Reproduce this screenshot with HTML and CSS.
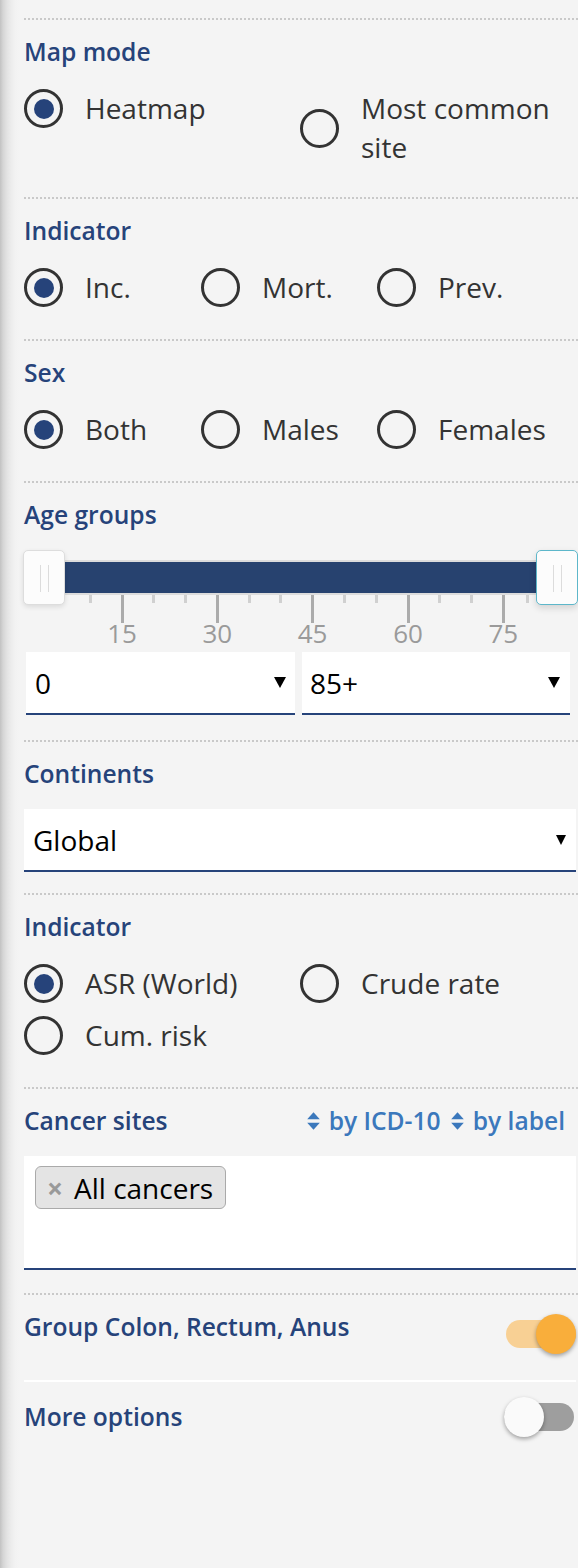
FILE: index.html
```html
<!DOCTYPE html>
<html lang="en">
<head>
<meta charset="utf-8">
<title>Map options</title>
<link rel="stylesheet" href="styles.css">
</head>
<body>
<div class="panel">

  <section class="sec">
    <h3 class="title">Map mode</h3>
    <div class="radios cols-2 radios-wrap">
      <div class="radio checked"><span class="dot"></span><span class="lbl">Heatmap</span></div>
      <div class="radio"><span class="dot"></span><span class="lbl">Most common site</span></div>
    </div>
  </section>

  <section class="sec">
    <h3 class="title">Indicator</h3>
    <div class="radios cols-3">
      <div class="radio checked"><span class="dot"></span><span class="lbl">Inc.</span></div>
      <div class="radio"><span class="dot"></span><span class="lbl">Mort.</span></div>
      <div class="radio"><span class="dot"></span><span class="lbl">Prev.</span></div>
    </div>
  </section>

  <section class="sec">
    <h3 class="title">Sex</h3>
    <div class="radios cols-3">
      <div class="radio checked"><span class="dot"></span><span class="lbl">Both</span></div>
      <div class="radio"><span class="dot"></span><span class="lbl">Males</span></div>
      <div class="radio"><span class="dot"></span><span class="lbl">Females</span></div>
    </div>
  </section>

  <section class="sec sec-age">
    <h3 class="title">Age groups</h3>
    <div class="slider">
      <div class="track"></div>
      <div class="bar"></div>
      <div class="tick" style="left:64.5px"></div>
      <div class="tick major" style="left:96.5px"></div>
      <div class="tick" style="left:128.3px"></div>
      <div class="tick" style="left:160px"></div>
      <div class="tick major" style="left:191.8px"></div>
      <div class="tick" style="left:223.5px"></div>
      <div class="tick" style="left:255.3px"></div>
      <div class="tick major" style="left:287.1px"></div>
      <div class="tick" style="left:318.9px"></div>
      <div class="tick" style="left:350.5px"></div>
      <div class="tick major" style="left:382.5px"></div>
      <div class="tick" style="left:414.1px"></div>
      <div class="tick" style="left:445.9px"></div>
      <div class="tick major" style="left:477.8px"></div>
      <div class="tick" style="left:501.5px"></div>
      <span class="num" style="left:98px">15</span>
      <span class="num" style="left:193.3px">30</span>
      <span class="num" style="left:288.6px">45</span>
      <span class="num" style="left:384px">60</span>
      <span class="num" style="left:479.3px">75</span>
      <div class="handle handle-from"></div>
      <div class="handle handle-to"></div>
    </div>
    <div class="pair">
      <div class="select select-from"><span>0</span><i class="caret"></i></div>
      <div class="select select-to"><span>85+</span><i class="caret"></i></div>
    </div>
  </section>

  <section class="sec sec-continents">
    <h3 class="title">Continents</h3>
    <div class="select select-wide"><span>Global</span><i class="caret caret-sm"></i></div>
  </section>

  <section class="sec">
    <h3 class="title">Indicator</h3>
    <div class="radios cols-2 radios-rows">
      <div class="radio checked"><span class="dot"></span><span class="lbl">ASR (World)</span></div>
      <div class="radio"><span class="dot"></span><span class="lbl">Crude rate</span></div>
      <div class="radio"><span class="dot"></span><span class="lbl">Cum. risk</span></div>
    </div>
  </section>

  <section class="sec">
    <div class="title-row">
      <h3 class="title">Cancer sites</h3>
      <div class="sorts">
        <span class="sort"><svg class="sort-icon" viewBox="0 0 15 20" width="15" height="20"><path d="M1.2 8.2 L7.5 1.2 L13.8 8.2 Z" /><path d="M1.2 11.8 L13.8 11.8 L7.5 18.8 Z" /></svg>by ICD-10</span>
        <span class="sort"><svg class="sort-icon" viewBox="0 0 15 20" width="15" height="20"><path d="M1.2 8.2 L7.5 1.2 L13.8 8.2 Z" /><path d="M1.2 11.8 L13.8 11.8 L7.5 18.8 Z" /></svg>by label</span>
      </div>
    </div>
    <div class="multi">
      <span class="tag"><span class="tag-x">×</span>All cancers</span>
    </div>
  </section>

  <section class="sec sec-group">
    <div class="switch-row switch-row-top">
      <h3 class="title">Group Colon, Rectum, Anus</h3>
      <div class="toggle on"><span class="toggle-track"></span><span class="toggle-knob"></span></div>
    </div>
  </section>
  <div class="solid-sep"></div>

  <section class="sec-plain">
    <div class="switch-row">
      <h3 class="title">More options</h3>
      <div class="toggle off"><span class="toggle-track"></span><span class="toggle-knob"></span></div>
    </div>
  </section>

</div>
</body>
</html>
```

FILE: styles.css
```css
* { box-sizing: border-box; }

html, body {
  margin: 0;
  padding: 0;
}

body {
  width: 578px;
  min-height: 1568px;
  overflow: hidden;
  background: linear-gradient(to right, #c2c2c2 0px, #d5d5d5 3px, #e3e3e3 7px, #ececec 11px, #f2f2f2 15px, #f4f4f4 19px, #f4f4f4 100%);
  font-family: "Open Sans", "Noto Sans", sans-serif;
  color: #333;
}

.panel {
  padding: 18px 0 0 24px;
}

.sec {
  border-top: 2px dotted #c9c9c9;
  padding: 16px 2px 21px 0;
}

.sec-plain {
  padding: 15px 2px 0 0;
}

.title {
  margin: 0;
  font-size: 24.6px;
  line-height: 32px;
  font-weight: 600;
  color: #26437a;
}

/* radios */
.radios {
  display: grid;
  align-items: start;
  margin: 21px 0 11px 0;
}
.cols-2 { grid-template-columns: 276px 1fr; }
.cols-3 { grid-template-columns: 177px 176px 1fr; }
.radios-wrap { margin-bottom: 9px; }
.radios-rows { row-gap: 13px; }

.radio {
  display: flex;
  align-items: center;
  gap: 22px;
  font-size: 28px;
  line-height: 39px;
  color: #333;
}

.dot {
  flex: none;
  width: 39px;
  height: 39px;
  border: 3.3px solid #333;
  border-radius: 50%;
  display: flex;
  align-items: center;
  justify-content: center;
}
.radio.checked .dot::after {
  content: "";
  width: 20px;
  height: 20px;
  border-radius: 50%;
  background: #26437a;
}

/* slider */
.sec-age { padding-bottom: 25px; }

.slider {
  position: relative;
  height: 100px;
  margin: 19px -2px 0 0;
}
.track {
  position: absolute;
  left: 20px;
  right: 20px;
  top: 10px;
  height: 35px;
  background: #dcdcdc;
}
.bar {
  position: absolute;
  left: 41px;
  width: 471px;
  top: 12px;
  height: 31px;
  background: #27426f;
}
.tick {
  position: absolute;
  top: 45px;
  width: 3px;
  height: 8px;
  background: #d0d0d0;
}
.tick.major {
  height: 28px;
  background: #ababab;
}
.num {
  position: absolute;
  top: 67px;
  width: 60px;
  margin-left: -30px;
  text-align: center;
  font-size: 26px;
  line-height: 32px;
  color: #9a9a9a;
}
.handle {
  position: absolute;
  top: 0;
  width: 42px;
  height: 55px;
  background: #fcfcfc;
  border: 1.5px solid #dddddd;
  border-radius: 5px;
  box-shadow: 0 2px 5px rgba(0, 0, 0, 0.10);
}
.handle::before {
  content: "";
  position: absolute;
  left: 15.5px;
  top: 13.5px;
  width: 7.5px;
  height: 27px;
  border-left: 1.5px solid #dcdcdc;
  border-right: 1.5px solid #dcdcdc;
}
.handle-from { left: -1px; }
.handle-to {
  left: 512px;
  border-color: #5db7ca;
  box-shadow: 0 3px 7px rgba(0, 0, 0, 0.14);
}

/* selects */
.pair {
  display: flex;
  gap: 7px;
  margin-top: 2px;
  padding-left: 2px;
}
.select {
  display: flex;
  align-items: center;
  justify-content: space-between;
  height: 63px;
  background: #fff;
  border-bottom: 2px solid #26437a;
  padding: 0 9px;
  font-size: 28px;
  color: #000;
}
.select-from { width: 269px; }
.select-to { width: 268px; padding: 0 10px 0 8px; }
.select-wide { margin-top: 19px; padding: 0 10px 0 9px; }

.caret {
  width: 0;
  height: 0;
  border-left: 6.5px solid transparent;
  border-right: 6.5px solid transparent;
  border-top: 11px solid #000;
}
.caret-sm {
  border-left-width: 5.5px;
  border-right-width: 5.5px;
  border-top-width: 10px;
}

/* cancer sites */
.title-row {
  display: flex;
  justify-content: space-between;
  align-items: center;
}
.sorts {
  display: flex;
  gap: 9px;
  padding-right: 11px;
}
.sort {
  display: flex;
  align-items: center;
  gap: 8px;
  font-size: 24.6px;
  line-height: 32px;
  font-weight: 600;
  color: #3b78bc;
}
.sort-icon { fill: #3b78bc; display: block; }

.multi {
  height: 114px;
  margin: 19px 0 2px 0;
  padding: 10px 11px;
  background: #fff;
  border-bottom: 2px solid #26437a;
}
.tag {
  display: inline-flex;
  align-items: center;
  height: 43px;
  padding: 0 12px 0 11px;
  background: #e4e4e4;
  border: 1.5px solid #aaaaaa;
  border-radius: 6px;
  font-size: 28px;
  color: #000;
}
.tag-x {
  font-size: 28px;
  font-weight: 700;
  color: #999;
  margin-right: 11px;
}

/* toggles */
.sec-group { padding-bottom: 26px; }

.switch-row {
  display: flex;
  justify-content: space-between;
  align-items: center;
}
.switch-row-top { align-items: flex-start; }
.switch-row-top .toggle { margin-top: 3px; }

.solid-sep {
  height: 2px;
  margin-right: 2px;
  background: #fff;
}

.toggle {
  position: relative;
  width: 70px;
  height: 40px;
  flex: none;
}
.toggle-track {
  position: absolute;
  left: 0;
  right: 0;
  top: 6px;
  height: 28px;
  border-radius: 14px;
}
.toggle-knob {
  position: absolute;
  top: 0;
  width: 40px;
  height: 40px;
  border-radius: 50%;
  box-shadow: 0 2px 4px rgba(0, 0, 0, 0.35);
}
.toggle.on .toggle-track { background: #f8d094; }
.toggle.on .toggle-knob { right: 0; background: #f9ae3b; }
.toggle.off { margin-right: 2px; }
.toggle.off .toggle-track { background: #9e9e9e; }
.toggle.off .toggle-knob { left: 0; background: #fafafa; }
```
